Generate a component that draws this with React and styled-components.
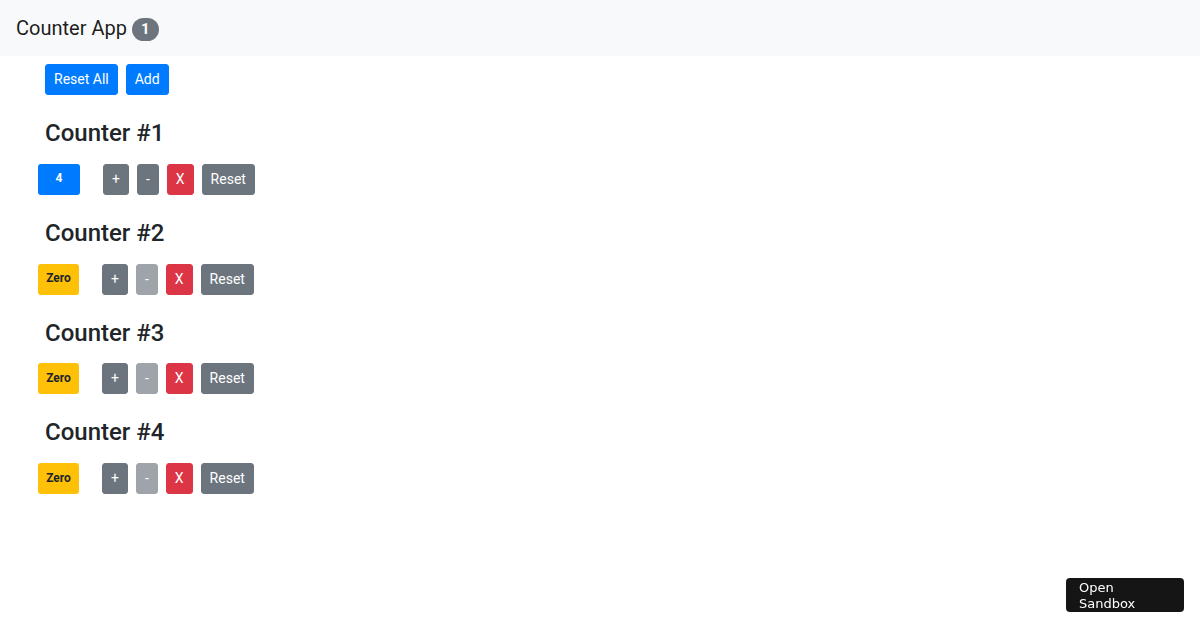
import { createGlobalStyle, styled } from "styled-components";

const counters = [
    { id: 1, value: 4 },
    { id: 2, value: 0 },
    { id: 3, value: 0 },
    { id: 4, value: 0 },
];

const GlobalStyle = createGlobalStyle`
    * {
        box-sizing: border-box;
    }
    body {
        margin: 0;
        font-family: Roboto, "Liberation Sans", sans-serif;
        font-size: 16px;
        color: #212529;
        background: #ffffff;
    }
`;

export default function App() {
    return (
        <>
            <GlobalStyle />
            <Navbar>
                <Brand>
                    Counter App <Pill>{counters.filter((c) => c.value > 0).length}</Pill>
                </Brand>
            </Navbar>
            <Main>
                <Toolbar>
                    <Button variant="primary">Reset All</Button>
                    <Button variant="primary">Add</Button>
                </Toolbar>
                {counters.map(({ id, value }) => (
                    <CounterBlock key={id}>
                        <Heading>Counter #{id}</Heading>
                        <Row>
                            <CountBadge zero={value === 0}>
                                {value === 0 ? "Zero" : value}
                            </CountBadge>
                            <Actions>
                                <Button variant="secondary">+</Button>
                                <Button variant="secondary" disabled={value === 0}>
                                    -
                                </Button>
                                <Button variant="danger">X</Button>
                                <Button variant="secondary">Reset</Button>
                            </Actions>
                        </Row>
                    </CounterBlock>
                ))}
            </Main>
            <SandboxButton>
                Open
                <br />
                Sandbox
            </SandboxButton>
        </>
    );
}

const colors = {
    primary: "#007bff",
    secondary: "#6c757d",
    danger: "#dc3545",
};

const Navbar = styled.nav`
    display: flex;
    align-items: center;
    height: 56px;
    padding: 8px 16px;
    background-color: #f8f9fa;
`;

const Brand = styled.span`
    display: flex;
    align-items: center;
    gap: 5px;
    font-size: 20px;
    line-height: 30px;
    color: rgba(0, 0, 0, 0.9);
`;

const Pill = styled.span`
    display: inline-block;
    padding: 4px 9px;
    border-radius: 10rem;
    background-color: #6c757d;
    color: #ffffff;
    font-size: 15px;
    font-weight: 700;
    line-height: 1;
    margin-top: 2px;
`;

const Main = styled.main`
    padding-left: 45px;
`;

const Toolbar = styled.div`
    display: flex;
    gap: 8px;
    padding-top: 8px;
`;

const Button = styled.button`
    height: 31px;
    padding: 4px 8px;
    border: 1px solid ${({ variant }) => colors[variant]};
    border-radius: 3px;
    background-color: ${({ variant }) => colors[variant]};
    color: #ffffff;
    font-family: Roboto, "Liberation Sans", sans-serif;
    font-size: 14px;
    line-height: 21px;
    cursor: pointer;
    &:disabled {
        opacity: 0.65;
        cursor: default;
    }
`;

const CounterBlock = styled.section`
    margin-top: 24px;
`;

const Heading = styled.h4`
    margin: 0 0 16px;
    font-size: 24px;
    font-weight: 500;
    line-height: 28.8px;
    color: #212529;
`;

const Row = styled.div`
    display: flex;
    align-items: center;
    margin-left: -7px;
    gap: 23px;
`;

const CountBadge = styled.span`
    display: flex;
    align-items: center;
    justify-content: center;
    width: ${({ zero }) => (zero ? "41px" : "42px")};
    height: 31px;
    padding-bottom: 2px;
    border-radius: 3px;
    background-color: ${({ zero }) => (zero ? "#ffc107" : "#007bff")};
    color: ${({ zero }) => (zero ? "#212529" : "#ffffff")};
    font-size: 12px;
    font-weight: 700;
`;

const Actions = styled.div`
    display: flex;
    gap: 8px;
`;

const SandboxButton = styled.button`
    position: fixed;
    right: 16px;
    bottom: 18px;
    width: 118px;
    height: 34px;
    padding: 2px 13px 0;
    border: none;
    border-radius: 4px;
    background-color: #151515;
    color: #ffffff;
    font-family: "DejaVu Sans", Verdana, sans-serif;
    font-size: 13px;
    line-height: 16px;
    text-align: left;
`;
